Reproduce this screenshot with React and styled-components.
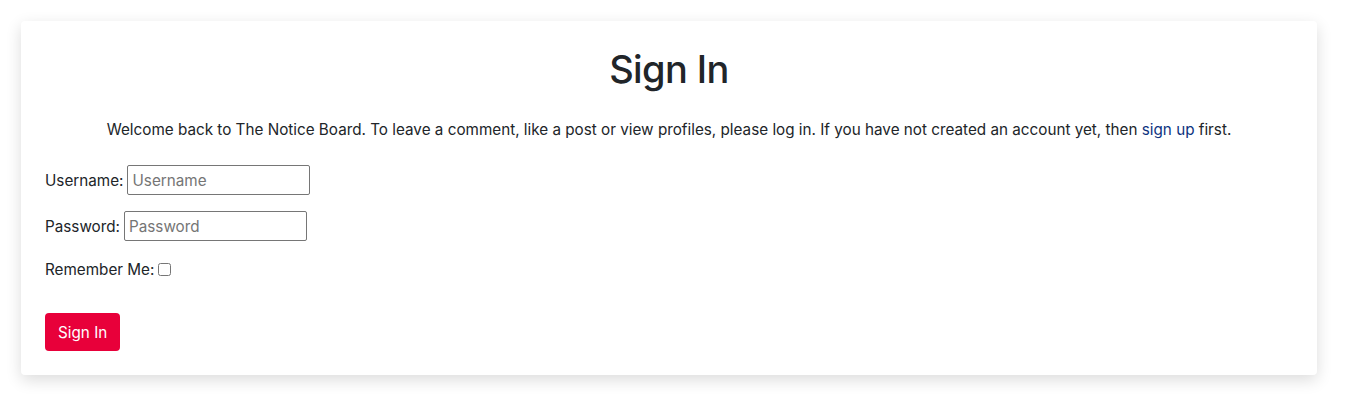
import React from "react";
import styled, { createGlobalStyle } from "styled-components";

const GlobalStyle = createGlobalStyle`
  body {
    margin: 0;
    background: #fff;
    font-family: Inter, "Noto Sans", sans-serif;
    color: #212529;
  }
`;

// Page wrapper
const Page = styled.div`
  padding: 21px 35px 30px 21px;
`;

const Card = styled.div`
  background: #fff;
  border-radius: 4px;
  box-shadow: 0 5px 16px rgba(0, 0, 0, 0.14);
  padding: 24px 24px 24px;
  min-height: 306px;
`;

const Title = styled.h1`
  margin: 0;
  text-align: center;
  font-size: 38px;
  font-weight: 500;
  line-height: 48px;
  letter-spacing: -0.6px;
`;

const Intro = styled.p`
  margin: 25px 0 23px;
  text-align: center;
  font-size: 15.25px;
  line-height: 24px;
`;

const SignUpLink = styled.a`
  color: #0e3380;
  text-decoration: none;
`;

const Form = styled.form`
  display: flex;
  flex-direction: column;
  align-items: flex-start;
`;

const Row = styled.div`
  display: flex;
  align-items: center;
  height: 30px;
  margin-bottom: ${(p) => p.gap || 16}px;
  font-size: 15.25px;
`;

const Label = styled.label`
  margin-right: 4px;
`;

const Input = styled.input`
  width: 183px;
  height: 30px;
  box-sizing: border-box;
  border: 1px solid #767676;
  border-radius: 2px;
  padding: 0 4px;
  font-family: inherit;
  font-size: 15.25px;
  color: #212529;

  &::placeholder {
    color: #757575;
  }
`;

const Check = styled.input`
  width: 13px;
  height: 13px;
  margin: 0;
`;

const Button = styled.button`
  margin-top: 2px;
  height: 38px;
  padding: 0 13px;
  background: #e8003a;
  color: #fff;
  border: none;
  border-radius: 4px;
  font-family: inherit;
  font-size: 15.25px;
  cursor: pointer;
`;

const App = () => (
  <>
    <GlobalStyle />
    <Page>
      <Card>
        <Title>Sign In</Title>
        <Intro>
          Welcome back to The Notice Board. To leave a comment, like a post or
          view profiles, please log in. If you have not created an account yet,
          then <SignUpLink href="#">sign up</SignUpLink> first.
        </Intro>
        <Form onSubmit={(e) => e.preventDefault()}>
          <Row>
            <Label htmlFor="username">Username:</Label>
            <Input id="username" placeholder="Username" />
          </Row>
          <Row gap={13}>
            <Label htmlFor="password">Password:</Label>
            <Input id="password" type="password" placeholder="Password" />
          </Row>
          <Row gap={27}>
            <Label htmlFor="remember">Remember Me:</Label>
            <Check id="remember" type="checkbox" />
          </Row>
          <Button type="submit">Sign In</Button>
        </Form>
      </Card>
    </Page>
  </>
);

export default App;
